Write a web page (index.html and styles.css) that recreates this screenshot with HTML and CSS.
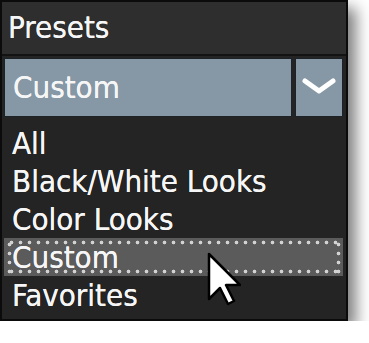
FILE: index.html
```html
<!DOCTYPE html>
<html lang="en">
<head>
    <meta charset="UTF-8">
    <meta name="viewport" content="width=device-width, initial-scale=1.0">
    <title>Presets</title>
    <link rel="stylesheet" href="styles.css">
</head>
<body>
    <div class="panel">
        <div class="panel-header">Presets</div>

        <div class="combo">
            <div class="combo-value">Custom</div>
            <div class="combo-button">
                <svg width="36" height="20" viewBox="0 0 36 20">
                    <polyline points="4,4 18,14 32,4" fill="none" stroke="#fff" stroke-width="5" stroke-linecap="round" stroke-linejoin="round"/>
                </svg>
            </div>
        </div>

        <ul class="preset-list">
            <li>All</li>
            <li>Black/White Looks</li>
            <li>Color Looks</li>
            <li class="selected">Custom</li>
            <li>Favorites</li>
        </ul>

        <!-- mouse pointer over the list -->
        <svg class="cursor" width="34" height="56" viewBox="0 0 34 56">
            <path d="M2 2 L2 47 L13 36 L21 52 L27 49 L19 33 L33 33 Z" fill="#fff" stroke="#000" stroke-width="2.5" stroke-linejoin="round"/>
        </svg>
    </div>
</body>
</html>
```

FILE: styles.css
```css
body {
    margin: 0;
    background-color: #fff;
    font-family: 'DejaVu Sans Condensed', 'DejaVu Sans', sans-serif;
    font-size: 31px;
    color: #f6f6f6;
}

.panel {
    position: relative;
    box-sizing: border-box;
    width: 348px;
    height: 321px;
    background-color: #242424;
    border: 2px solid #0b0b0b;
    box-shadow: 8px 8px 14px rgba(0, 0, 0, 0.5);
    text-shadow: 0 0 0.6px #fff;
}

.panel-header {
    height: 54px;
    box-sizing: border-box;
    padding: 6px 0 0 6px;
    line-height: 38px;
    background-color: #2e2e2e;
    border-bottom: 2px solid #131313;
}

.combo {
    display: flex;
    gap: 3px;
    height: 59px;
    margin: 2px 3px 0 2px;
}

.combo-value {
    flex: 1;
    box-sizing: border-box;
    padding-left: 8px;
    line-height: 57px;
    background-color: #8698a5;
    border: 1px solid #1c2226;
}

.combo-button {
    width: 48px;
    box-sizing: border-box;
    display: flex;
    align-items: center;
    justify-content: center;
    padding-bottom: 2px;
    background-color: #8698a5;
    border: 1px solid #1c2226;
}

.preset-list {
    list-style: none;
    margin: 7px 3px 0 2px;
    padding: 0;
}

.preset-list li {
    position: relative;
    height: 38px;
    line-height: 38px;
    padding-left: 8px;
    white-space: nowrap;
}

.preset-list li.selected {
    background-color: #5b5b5b;
}

/* focus rectangle: round dots, about 9px apart */
.preset-list li.selected::after {
    content: "";
    position: absolute;
    top: 2px;
    left: 3px;
    right: 2px;
    bottom: 2px;
    background:
        radial-gradient(circle, #d2d2d2 1.5px, transparent 2.2px) top left / 9px 5px repeat-x,
        radial-gradient(circle, #d2d2d2 1.5px, transparent 2.2px) bottom left / 9px 5px repeat-x,
        radial-gradient(circle, #d2d2d2 1.5px, transparent 2.2px) top left / 5px 9px repeat-y,
        radial-gradient(circle, #d2d2d2 1.5px, transparent 2.2px) top right / 5px 9px repeat-y;
}

.cursor {
    position: absolute;
    left: 205px;
    top: 250px;
}
```
